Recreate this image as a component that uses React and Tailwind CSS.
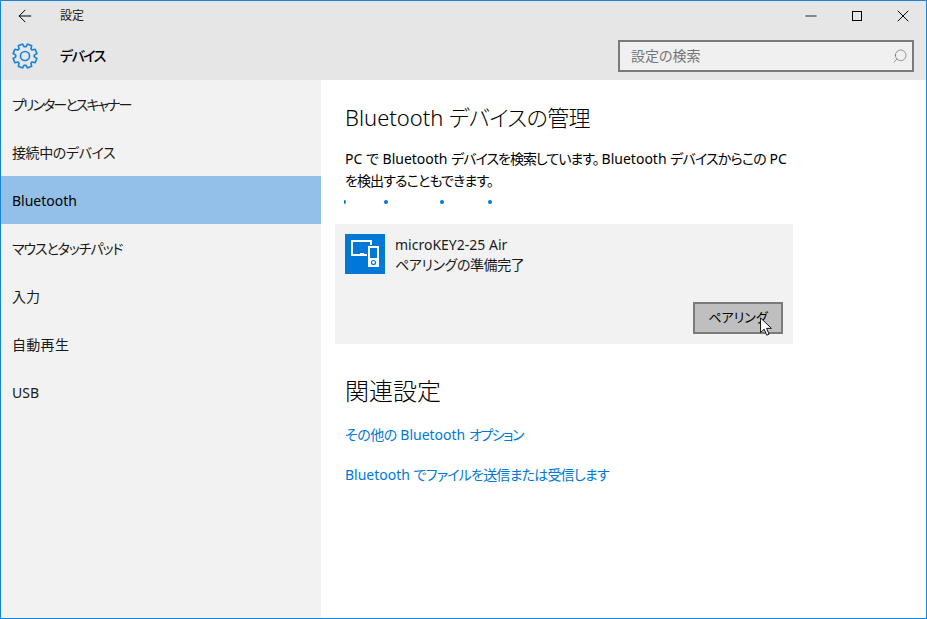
import { ArrowLeft, Minus, X, Search } from "lucide-react";

const navItems = [
  { label: "プリンターとスキャナー", track: "tracking-[-1.9px]" },
  { label: "接続中のデバイス", track: "tracking-[-0.4px]" },
  { label: "Bluetooth", track: "" },
  { label: "マウスとタッチパッド", track: "tracking-[-1.1px]" },
  { label: "入力", track: "" },
  { label: "自動再生", track: "tracking-[0.3px]" },
  { label: "USB", track: "" },
];

// 8 tooth gear outline, drawn around 12,12
const gearPath = () => {
  const pts = [];
  for (let i = 0; i < 8; i++) {
    const a = (i * Math.PI) / 4 + Math.PI / 8;
    [[-0.3, 8.6], [-0.19, 11.2], [0.19, 11.2], [0.3, 8.6]].forEach(([d, r]) => {
      pts.push(`${(12 + r * Math.sin(a + d)).toFixed(2)} ${(12 - r * Math.cos(a + d)).toFixed(2)}`);
    });
  }
  return `M${pts.join("L")}Z`;
};

const App = () => {
  return (
    <div className="w-[927px] h-[619px] flex flex-col border border-[#1883d7] bg-white text-[#1a1a1a] overflow-hidden font-['Noto_Sans','Noto_Sans_CJK_JP',sans-serif] [font-feature-settings:'palt']">
      <div className="h-[79px] bg-[#e6e6e6] shrink-0">
        <div className="h-[30px] flex items-center">
          <ArrowLeft className="w-[20px] h-[20px] ml-[14px] text-black" strokeWidth={1.2} />
          <span className="ml-[25px] text-[12px] leading-none">設定</span>
          <div className="ml-auto flex items-center">
            <Minus className="w-[18px] h-[18px] mr-[32px] text-black" strokeWidth={1.1} />
            <div className="w-[10px] h-[10px] border border-black mr-[31px]" />
            <X className="w-[20px] h-[20px] mr-[13px] text-black" strokeWidth={1.2} />
          </div>
        </div>
        <div className="h-[49px] flex items-center">
          <svg viewBox="0 0 24 24" className="w-[26px] h-[26px] ml-[11px]" fill="none" stroke="#1883d7" strokeWidth="1.5">
            <path d={gearPath()} strokeLinejoin="round" />
            <circle cx="12" cy="12" r="4.2" />
          </svg>
          <span className="ml-[22px] text-[14px] font-medium text-black tracking-[-1.5px]">デバイス</span>
          <div className="ml-auto mr-[12px] w-[296px] h-[32px] border-2 border-[#7a7a7a] bg-[#f0f0f0] flex items-center pl-[11px] pr-[4px]">
            <span className="text-[14px] leading-none text-[#757575]">設定の検索</span>
            <Search className="ml-auto w-[16px] h-[16px] text-[#666666] -scale-x-100" strokeWidth={1} />
          </div>
        </div>
      </div>

      <div className="flex-1 flex min-h-0">
        <div className="w-[320px] bg-[#f2f2f2] shrink-0">
          {navItems.map((item) => (
            <div
              key={item.label}
              className={`h-[48px] flex items-center pl-[11px] text-[14px] ${item.track} ${item.label === "Bluetooth" ? "bg-[#92c0e8] text-black" : "text-[#1a1a1a]"}`}
            >
              {item.label}
            </div>
          ))}
        </div>

        <div className="flex-1 pt-[21px] pl-[14px]">
          <h1 className="pl-[10px] text-[22px] leading-[32px] font-light text-black">
            Bluetooth <span className="tracking-[-0.6px]">デバイスの管理</span>
          </h1>
          <p className="mt-[15px] pl-[10px] w-[470px] text-[14px] leading-[22px] text-black">
            PC で Bluetooth <span className="tracking-[-1px]">デバイスを検索しています。</span>
            <span className="ml-[3px]">Bluetooth</span> <span className="tracking-[-0.8px]">デバイスからこの</span> PC
            <br />
            <span className="tracking-[-0.9px]">を検出することもできます。</span>
          </p>
          <div className="mt-[8px] ml-[9px] h-[4px] flex items-center">
            <span className="w-[2px] h-[4px] bg-[#0078d7] rounded-r-full" />
            <span className="ml-[38px] w-[4px] h-[4px] rounded-full bg-[#0078d7]" />
            <span className="ml-[52px] w-[4px] h-[4px] rounded-full bg-[#0078d7]" />
            <span className="ml-[44px] w-[4px] h-[4px] rounded-full bg-[#0078d7]" />
          </div>

          <div className="mt-[20px] w-[458px] h-[120px] bg-[#f2f2f2] flex flex-col pt-[10px] pl-[10px] pr-[10px]">
            <div className="flex">
              <div className="w-[40px] h-[40px] bg-[#0078d7] shrink-0">
                <svg viewBox="0 0 40 40" className="w-[40px] h-[40px]">
                  <path d="M7 7h19v14H7z" fill="none" stroke="#fff" strokeWidth="2" />
                  <path d="M15 19.5h4" stroke="#fff" strokeWidth="1" />
                  <path d="M22.5 11.5h12v22h-12z" fill="#fff" stroke="#0078d7" strokeWidth="1" />
                  <path d="M25 14h7v10h-7z" fill="#0078d7" />
                  <circle cx="28.5" cy="28.5" r="2" fill="none" stroke="#0078d7" strokeWidth="1.2" />
                </svg>
              </div>
              <div className="ml-[10px] pt-[1px] text-[14px] leading-[20px] text-[#1a1a1a]">
                <div>microKEY2-25 Air</div>
                <div className="tracking-[-0.4px]">ペアリングの準備完了</div>
              </div>
            </div>
            <div className="mt-[27px] flex justify-end">
              <div className="relative w-[90px] h-[32px] border-2 border-[#7a7a7a] bg-[#bfbfbf] flex items-center justify-center text-[13px] text-black">
                ペアリング
                <svg viewBox="0 0 14 22" className="absolute left-[64px] top-[13px] w-[14px] h-[20px]">
                  <path d="M1 1v16l4-3.6 2.8 6.6 2.6-1.1-2.8-6.4H13z" fill="#fff" stroke="#000" strokeWidth="1" />
                </svg>
              </div>
            </div>
          </div>

          <h2 className="mt-[31px] pl-[10px] text-[24px] leading-[32px] font-light text-black">関連設定</h2>
          <div className="mt-[18px] pl-[10px] text-[14px] leading-[20px] text-[#0078d7]">
            <span className="tracking-[-0.5px]">その他の</span> Bluetooth <span className="tracking-[-1.5px]">オプション</span>
          </div>
          <div className="mt-[20px] pl-[10px] text-[14px] leading-[20px] text-[#0078d7]">
            Bluetooth <span className="tracking-[-0.8px]">でファイルを送信または受信します</span>
          </div>
        </div>
      </div>
    </div>
  );
};

export default App;
